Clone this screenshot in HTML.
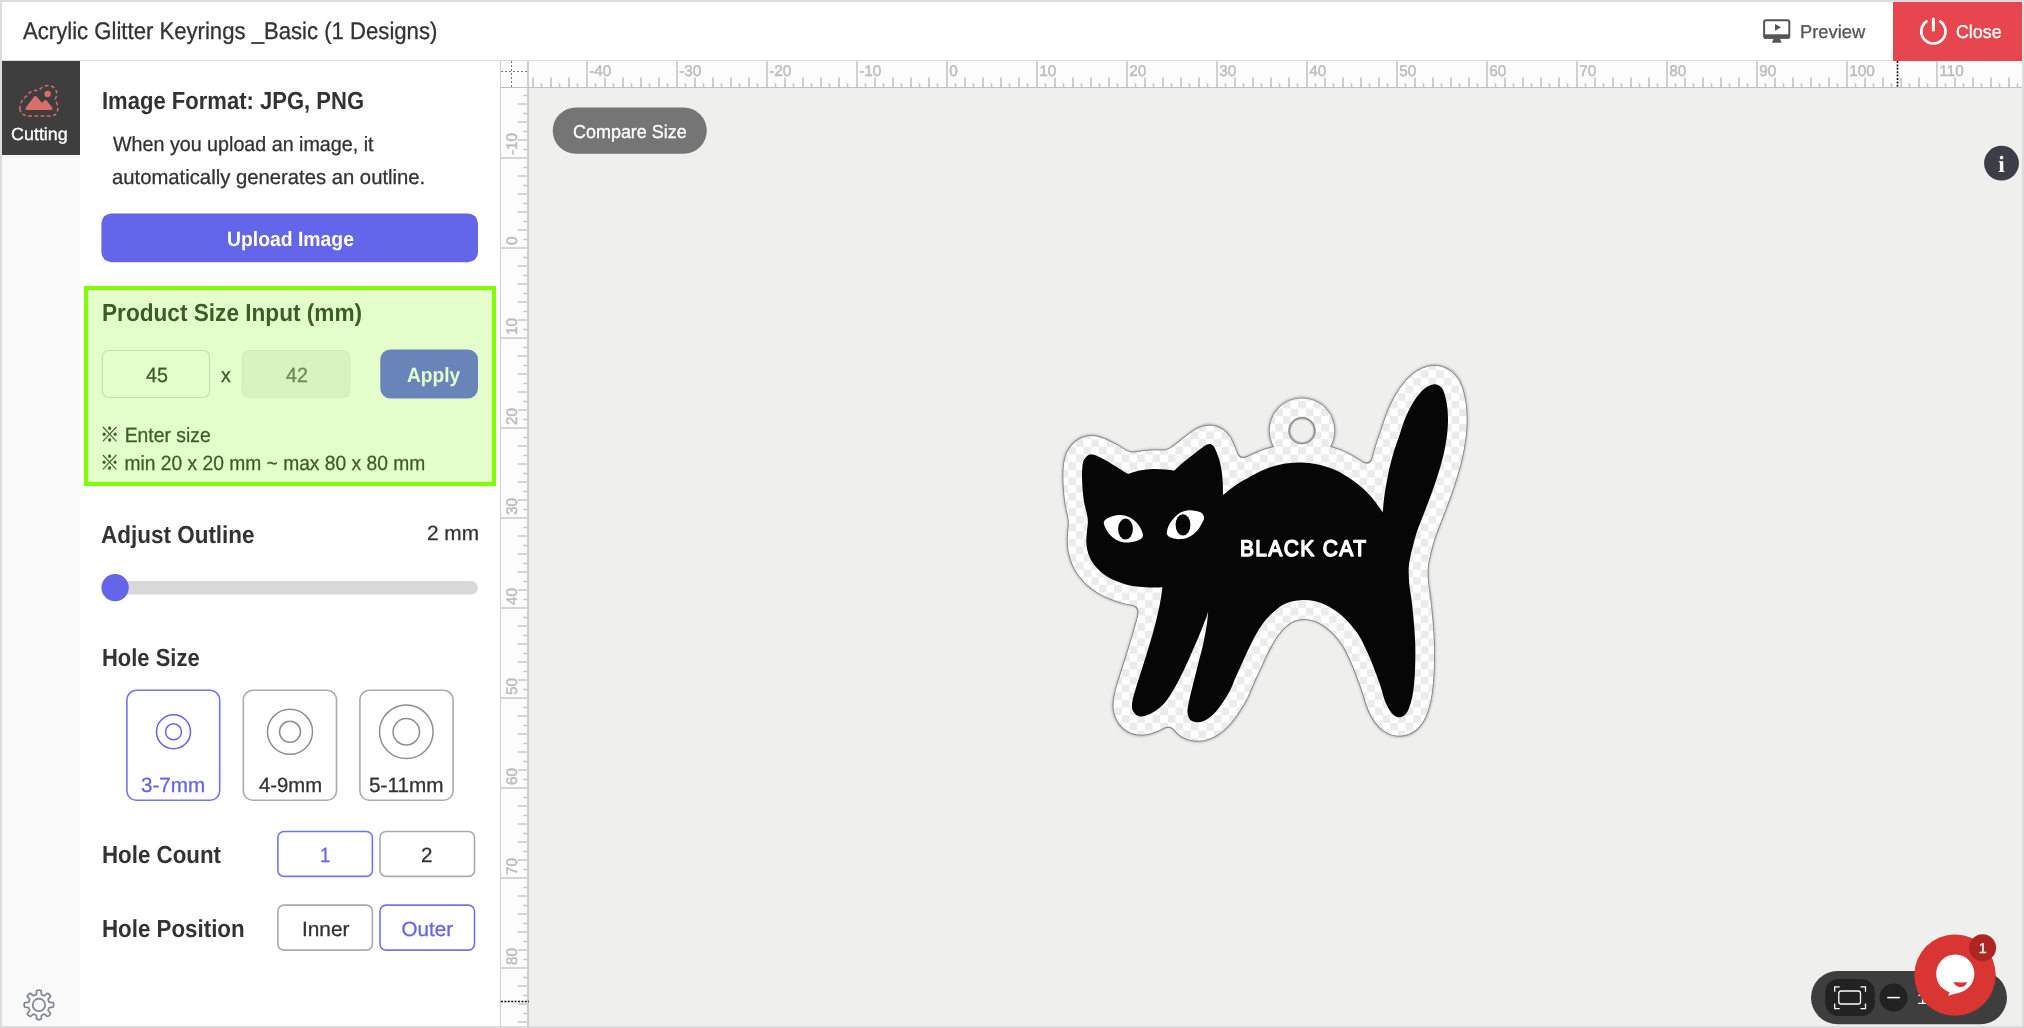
<!DOCTYPE html>
<html lang="en">
<head>
<meta charset="utf-8">
<title>Acrylic Glitter Keyrings _Basic (1 Designs)</title>
<style>
*{box-sizing:border-box;margin:0;padding:0}
html,body{width:2024px;height:1028px;overflow:hidden;background:#fff}
body{position:relative;font-family:"Liberation Sans","Noto Sans CJK KR",sans-serif;color:#333;font-size:20px;line-height:1;text-rendering:geometricPrecision}
.t{position:absolute;display:block;white-space:nowrap;line-height:1;font-weight:normal;transform-origin:0 0;-webkit-text-stroke:.3px currentColor}
.t.b{font-weight:bold;-webkit-text-stroke:0}
#frame{position:absolute;left:0;top:0;width:2024px;height:1028px;border:2px solid #dcdcdc;pointer-events:none;z-index:50}
#header{position:absolute;left:2px;top:2px;width:2020px;height:59px;background:#fff;border-bottom:1px solid #dcdcdc}
#close{position:absolute;left:1893px;top:2px;width:129px;height:59px;background:#e8464f}
#strip{position:absolute;left:2px;top:61px;width:78px;height:965px;background:#f9f9f9}
#tabline{position:absolute;left:2px;top:156px;width:78px;height:1px;background:#f2f2f2}
#tab{position:absolute;left:2px;top:61px;width:78px;height:94px;background:#3e3e3e}
#panel{position:absolute;left:80px;top:61px;width:420px;height:965px;background:#fff}
#vline{position:absolute;left:500px;top:61px;width:1px;height:965px;background:#cfcfcf}
#canvas{position:absolute;left:501px;top:61px;width:1521px;height:965px;background:#efefed}
#hl{position:absolute;left:84px;top:286px;width:412px;height:200px;border:4px solid #7fff00;background:rgba(127,255,0,.2);z-index:5}
svg{position:absolute;left:0;top:0;overflow:visible;will-change:transform}
</style>
</head>
<body>
<div id="header"></div>
<div id="close"></div>
<div id="strip"></div>
<div id="tab"></div>
<div id="tabline"></div>
<div id="panel"></div>
<div id="vline"></div>
<div id="canvas"></div>

<div id="hl"></div>

<svg id="art" width="2024" height="1028" viewBox="0 0 2024 1028">
<defs>
<pattern id="chk" x="1037.59" y="339.58" width="15.33" height="15.33" patternUnits="userSpaceOnUse">
<rect width="15.33" height="15.33" fill="#fff"/><rect width="7.665" height="7.665" fill="#ebebeb"/><rect x="7.665" y="7.665" width="7.665" height="7.665" fill="#ebebeb"/>
</pattern>
<filter id="sh" filterUnits="userSpaceOnUse" x="1030" y="330" width="470" height="440"><feGaussianBlur stdDeviation="1.6"/></filter>
<filter id="sh2" filterUnits="userSpaceOnUse" x="1280" y="410" width="44" height="44"><feGaussianBlur stdDeviation=".7"/></filter>
<filter id="sm" filterUnits="userSpaceOnUse" x="1030" y="330" width="470" height="440" color-interpolation-filters="sRGB"><feGaussianBlur stdDeviation="4"/><feComponentTransfer><feFuncA type="linear" slope="14" intercept="-6.5"/></feComponentTransfer></filter>
<mask id="mo" maskUnits="userSpaceOnUse" x="1030" y="330" width="470" height="440"><g fill="#fff" stroke="#fff"><g filter="url(#sm)"><path d="M1086.5 456.5C1087.1 456.2 1088.4 454.7 1090.0 454.5C1091.6 454.3 1093.0 454.3 1096.0 455.5C1099.0 456.7 1104.5 459.6 1108.3 461.8C1112.1 464.0 1115.7 466.5 1119.0 468.5C1122.3 470.5 1126.5 473.1 1128.0 474.0C1130.0 473.4 1135.8 471.3 1140.0 470.5C1144.2 469.7 1148.8 469.2 1153.0 469.0C1157.2 468.8 1161.4 469.2 1165.0 469.5C1168.6 469.8 1172.9 470.4 1174.5 470.6C1175.9 469.2 1180.1 465.0 1183.0 462.5C1185.9 460.0 1189.0 457.8 1192.0 455.5C1195.0 453.2 1198.5 450.3 1201.0 448.5C1203.5 446.7 1205.3 445.2 1207.0 444.5C1208.7 443.8 1209.8 443.7 1211.0 444.2C1212.2 444.7 1213.2 445.0 1214.5 447.5C1215.8 450.0 1217.8 455.2 1219.0 459.0C1220.2 462.8 1220.9 466.2 1221.5 470.0C1222.1 473.8 1222.5 477.8 1222.7 482.0C1223.0 486.2 1223.0 492.8 1223.0 495.0C1224.7 493.7 1229.4 489.7 1233.0 487.2C1236.6 484.7 1239.3 482.7 1244.5 479.8C1249.7 476.9 1257.6 472.3 1264.0 469.7C1270.4 467.1 1276.9 465.3 1283.0 464.1C1289.1 462.9 1294.8 462.5 1300.6 462.6C1306.4 462.7 1312.4 463.4 1318.0 464.5C1323.6 465.6 1329.2 467.5 1334.0 469.5C1338.8 471.5 1343.2 474.1 1347.0 476.4C1350.8 478.7 1353.7 480.9 1357.0 483.5C1360.3 486.1 1363.7 489.0 1366.7 492.0C1369.7 495.0 1372.3 498.1 1375.0 501.5C1377.7 504.9 1381.5 510.6 1382.8 512.4C1383.0 510.2 1383.5 503.4 1384.0 499.0C1384.5 494.6 1385.1 491.2 1386.0 486.0C1386.9 480.8 1388.2 473.8 1389.5 468.0C1390.8 462.2 1392.3 456.5 1394.0 451.0C1395.7 445.5 1397.7 440.3 1399.5 435.0C1401.3 429.7 1402.9 424.0 1404.8 419.2C1406.7 414.4 1408.8 410.1 1411.0 406.2C1413.2 402.2 1415.6 398.5 1418.0 395.5C1420.4 392.5 1422.8 389.9 1425.3 388.0C1427.8 386.1 1430.7 384.9 1432.8 384.4C1434.9 383.9 1436.4 384.2 1438.0 385.0C1439.6 385.8 1441.2 386.9 1442.5 389.0C1443.8 391.1 1444.7 394.3 1445.5 397.5C1446.3 400.7 1447.0 404.2 1447.4 408.0C1447.8 411.8 1448.0 416.1 1448.0 420.0C1448.0 423.9 1447.8 427.5 1447.4 431.7C1447.0 435.9 1446.3 440.4 1445.5 445.0C1444.7 449.6 1443.8 454.1 1442.5 459.0C1441.2 463.9 1439.6 469.3 1438.0 474.5C1436.4 479.7 1434.6 484.8 1432.8 490.0C1431.0 495.2 1429.0 500.3 1427.0 505.5C1425.0 510.7 1422.8 516.4 1421.0 521.0C1419.2 525.6 1417.8 529.1 1416.5 533.0C1415.2 536.9 1414.4 540.7 1413.4 544.5C1412.4 548.3 1411.2 552.6 1410.5 556.0C1409.8 559.4 1409.3 562.1 1409.0 565.0C1408.7 567.9 1408.6 569.8 1408.7 573.3C1408.8 576.8 1409.0 581.8 1409.5 586.0C1410.0 590.2 1410.8 594.1 1411.4 598.6C1412.0 603.1 1412.5 608.1 1413.0 613.0C1413.5 617.9 1413.9 622.8 1414.3 627.8C1414.7 632.8 1415.0 637.8 1415.2 643.0C1415.4 648.2 1415.4 653.7 1415.3 659.0C1415.2 664.3 1415.1 669.8 1414.8 675.0C1414.5 680.2 1414.0 685.5 1413.4 690.0C1412.8 694.5 1412.0 698.4 1411.0 702.0C1410.0 705.6 1408.8 709.1 1407.5 711.4C1406.2 713.7 1405.0 715.0 1403.5 716.0C1402.0 717.0 1400.2 717.3 1398.8 717.3C1397.4 717.3 1396.1 716.6 1395.0 716.0C1393.9 715.4 1393.1 714.7 1392.0 713.4C1390.9 712.1 1389.5 710.2 1388.3 708.0C1387.1 705.8 1385.9 703.6 1384.6 700.0C1383.3 696.4 1382.0 690.6 1380.5 686.2C1379.0 681.8 1377.7 678.1 1375.9 673.4C1374.2 668.7 1372.0 662.9 1370.0 658.2C1368.0 653.5 1366.1 649.3 1364.2 645.4C1362.3 641.5 1360.5 638.1 1358.4 634.8C1356.3 631.5 1353.7 628.3 1351.4 625.5C1349.1 622.7 1346.7 620.1 1344.4 617.9C1342.1 615.7 1339.7 613.9 1337.4 612.1C1335.1 610.4 1332.7 608.8 1330.4 607.4C1328.1 606.0 1326.1 605.0 1323.4 603.9C1320.7 602.8 1317.1 601.6 1314.0 601.0C1310.9 600.4 1307.8 600.1 1304.7 600.1C1301.6 600.1 1298.1 600.4 1295.4 600.8C1292.7 601.2 1290.5 601.7 1288.3 602.4C1286.1 603.1 1284.4 604.0 1282.5 605.1C1280.6 606.2 1278.7 607.7 1276.7 609.2C1274.8 610.8 1272.8 612.5 1270.8 614.4C1268.8 616.3 1266.9 618.4 1265.0 620.8C1263.1 623.2 1261.2 625.9 1259.2 629.0C1257.2 632.1 1255.2 635.8 1253.3 639.5C1251.3 643.2 1249.4 647.1 1247.5 651.2C1245.6 655.3 1243.7 659.7 1241.7 664.0C1239.8 668.3 1237.7 672.6 1235.8 676.9C1233.9 681.1 1232.3 685.8 1230.5 689.5C1228.7 693.2 1227.4 695.4 1225.0 699.0C1222.6 702.6 1219.2 707.9 1216.3 711.3C1213.4 714.6 1210.0 717.4 1207.5 719.1C1205.0 720.9 1203.2 721.3 1201.5 721.8C1199.8 722.3 1198.5 722.3 1197.0 722.2C1195.5 722.1 1193.8 721.9 1192.5 721.3C1191.2 720.6 1189.9 720.0 1189.1 718.3C1188.2 716.6 1187.4 714.2 1187.4 711.3C1187.4 708.4 1188.4 704.3 1189.1 700.8C1189.8 697.2 1190.7 693.6 1191.6 690.0C1192.5 686.4 1193.3 683.1 1194.4 678.9C1195.5 674.6 1196.8 669.3 1198.0 664.5C1199.2 659.7 1200.8 654.1 1201.8 650.0C1202.8 645.9 1203.4 643.0 1204.0 640.0C1204.6 637.0 1205.0 634.9 1205.6 631.7C1206.1 628.5 1206.9 624.4 1207.3 621.0C1207.7 617.6 1208.0 613.0 1208.2 611.4C1207.9 612.4 1207.0 615.6 1206.3 617.5C1205.6 619.4 1205.6 619.3 1204.1 623.0C1202.6 626.7 1199.7 634.3 1197.5 639.5C1195.3 644.7 1193.1 649.4 1190.9 654.4C1188.7 659.4 1186.5 664.6 1184.3 669.3C1182.1 674.0 1179.8 678.4 1177.6 682.5C1175.4 686.6 1173.2 690.6 1171.0 694.1C1168.8 697.6 1166.9 700.5 1164.4 703.2C1161.9 706.0 1158.8 708.7 1156.1 710.6C1153.3 712.5 1150.3 713.8 1147.9 714.8C1145.5 715.8 1143.3 716.3 1141.5 716.4C1139.7 716.5 1138.6 716.3 1137.3 715.6C1136.0 714.9 1134.7 713.6 1133.8 712.3C1132.9 710.9 1132.2 709.2 1132.0 707.5C1131.8 705.8 1132.0 703.9 1132.3 702.0C1132.6 700.1 1132.8 699.1 1133.6 696.0C1134.4 692.9 1136.0 687.7 1137.3 683.5C1138.6 679.3 1139.9 675.4 1141.4 670.6C1142.9 665.9 1144.7 660.2 1146.3 655.0C1147.9 649.8 1149.5 644.7 1151.0 639.5C1152.5 634.3 1154.0 629.2 1155.3 624.0C1156.6 618.8 1158.0 612.7 1159.0 608.3C1160.0 603.9 1160.4 601.0 1161.0 597.5C1161.6 594.0 1162.2 589.0 1162.4 587.3C1161.2 587.3 1157.6 587.6 1155.0 587.6C1152.4 587.6 1150.0 587.5 1147.0 587.3C1144.0 587.1 1140.2 586.9 1137.0 586.5C1133.8 586.1 1131.0 585.8 1127.8 585.0C1124.6 584.2 1121.2 583.1 1118.0 581.8C1114.8 580.5 1111.1 578.8 1108.3 577.2C1105.5 575.6 1103.3 573.9 1101.0 572.0C1098.7 570.1 1096.5 567.9 1094.7 565.6C1092.9 563.3 1091.2 560.6 1090.0 558.0C1088.8 555.4 1087.9 552.8 1087.3 550.0C1086.7 547.2 1086.3 544.2 1086.3 541.0C1086.2 537.8 1086.8 533.8 1087.0 531.0C1087.2 528.2 1087.7 526.3 1087.8 524.0C1087.9 521.7 1087.8 519.4 1087.5 517.0C1087.2 514.6 1086.4 512.0 1085.8 509.5C1085.2 506.9 1084.5 505.1 1084.0 501.7C1083.5 498.3 1082.9 493.2 1082.6 489.0C1082.3 484.8 1082.0 479.9 1082.0 476.4C1082.0 472.9 1082.0 470.6 1082.3 468.0C1082.5 465.4 1082.8 462.9 1083.5 461.0C1084.2 459.1 1086.0 457.2 1086.5 456.5Z" stroke-width="37.4" stroke-linejoin="round"/><path d="M1322.0 465.5C1324.0 466.2 1329.8 467.7 1334.0 469.5C1338.2 471.3 1343.2 474.1 1347.0 476.4C1350.8 478.7 1354.2 481.3 1357.0 483.5C1359.8 485.7 1362.8 488.5 1364.0 489.5" fill="none" stroke-width="40.6" stroke-linecap="round"/></g><circle cx="1302" cy="430.7" r="32.3" stroke="none"/></g></mask>
</defs>

<!-- rulers -->
<g id="rulers">
<rect x="501" y="61" width="1521" height="27" fill="#fcfcfc"/>
<rect x="501" y="61" width="27" height="965" fill="#fcfcfc"/>
<rect x="501" y="87" width="1521" height="1" fill="#c0c0c0"/>
<rect x="527.2" y="61" width="1.6" height="965" fill="#c4c4c4"/>
<path d="M587 61v26M677 61v26M767 61v26M857 61v26M947 61v26M1037 61v26M1127 61v26M1217 61v26M1307 61v26M1397 61v26M1487 61v26M1577 61v26M1667 61v26M1757 61v26M1847 61v26M1937 61v26M501 158h26M501 248h26M501 338h26M501 428h26M501 518h26M501 608h26M501 698h26M501 788h26M501 878h26M501 968h26" stroke="#c8c8c8" stroke-width="1.7" fill="none"/>
<path d="M533 77.6v9.4M541.5 83.2v3.8M551 77.6v9.4M559.5 83.2v3.8M569 77.6v9.4M577.5 83.2v3.8M595.5 83.2v3.8M605 77.6v9.4M613.5 83.2v3.8M623 77.6v9.4M631.5 83.2v3.8M641 77.6v9.4M649.5 83.2v3.8M659 77.6v9.4M667.5 83.2v3.8M685.5 83.2v3.8M695 77.6v9.4M703.5 83.2v3.8M713 77.6v9.4M721.5 83.2v3.8M731 77.6v9.4M739.5 83.2v3.8M749 77.6v9.4M757.5 83.2v3.8M775.5 83.2v3.8M785 77.6v9.4M793.5 83.2v3.8M803 77.6v9.4M811.5 83.2v3.8M821 77.6v9.4M829.5 83.2v3.8M839 77.6v9.4M847.5 83.2v3.8M865.5 83.2v3.8M875 77.6v9.4M883.5 83.2v3.8M893 77.6v9.4M901.5 83.2v3.8M911 77.6v9.4M919.5 83.2v3.8M929 77.6v9.4M937.5 83.2v3.8M955.5 83.2v3.8M965 77.6v9.4M973.5 83.2v3.8M983 77.6v9.4M991.5 83.2v3.8M1001 77.6v9.4M1009.5 83.2v3.8M1019 77.6v9.4M1027.5 83.2v3.8M1045.5 83.2v3.8M1055 77.6v9.4M1063.5 83.2v3.8M1073 77.6v9.4M1081.5 83.2v3.8M1091 77.6v9.4M1099.5 83.2v3.8M1109 77.6v9.4M1117.5 83.2v3.8M1135.5 83.2v3.8M1145 77.6v9.4M1153.5 83.2v3.8M1163 77.6v9.4M1171.5 83.2v3.8M1181 77.6v9.4M1189.5 83.2v3.8M1199 77.6v9.4M1207.5 83.2v3.8M1225.5 83.2v3.8M1235 77.6v9.4M1243.5 83.2v3.8M1253 77.6v9.4M1261.5 83.2v3.8M1271 77.6v9.4M1279.5 83.2v3.8M1289 77.6v9.4M1297.5 83.2v3.8M1315.5 83.2v3.8M1325 77.6v9.4M1333.5 83.2v3.8M1343 77.6v9.4M1351.5 83.2v3.8M1361 77.6v9.4M1369.5 83.2v3.8M1379 77.6v9.4M1387.5 83.2v3.8M1405.5 83.2v3.8M1415 77.6v9.4M1423.5 83.2v3.8M1433 77.6v9.4M1441.5 83.2v3.8M1451 77.6v9.4M1459.5 83.2v3.8M1469 77.6v9.4M1477.5 83.2v3.8M1495.5 83.2v3.8M1505 77.6v9.4M1513.5 83.2v3.8M1523 77.6v9.4M1531.5 83.2v3.8M1541 77.6v9.4M1549.5 83.2v3.8M1559 77.6v9.4M1567.5 83.2v3.8M1585.5 83.2v3.8M1595 77.6v9.4M1603.5 83.2v3.8M1613 77.6v9.4M1621.5 83.2v3.8M1631 77.6v9.4M1639.5 83.2v3.8M1649 77.6v9.4M1657.5 83.2v3.8M1675.5 83.2v3.8M1685 77.6v9.4M1693.5 83.2v3.8M1703 77.6v9.4M1711.5 83.2v3.8M1721 77.6v9.4M1729.5 83.2v3.8M1739 77.6v9.4M1747.5 83.2v3.8M1765.5 83.2v3.8M1775 77.6v9.4M1783.5 83.2v3.8M1793 77.6v9.4M1801.5 83.2v3.8M1811 77.6v9.4M1819.5 83.2v3.8M1829 77.6v9.4M1837.5 83.2v3.8M1855.5 83.2v3.8M1865 77.6v9.4M1873.5 83.2v3.8M1883 77.6v9.4M1891.5 83.2v3.8M1901 77.6v9.4M1909.5 83.2v3.8M1919 77.6v9.4M1927.5 83.2v3.8M1945.5 83.2v3.8M1955 77.6v9.4M1963.5 83.2v3.8M1973 77.6v9.4M1981.5 83.2v3.8M1991 77.6v9.4M1999.5 83.2v3.8M2009 77.6v9.4M2017.5 83.2v3.8M523.2 95.5h3.8M517.8 104h9.2M523.2 113.5h3.8M517.8 122h9.2M523.2 131.5h3.8M517.8 140h9.2M523.2 149.5h3.8M523.2 167.5h3.8M517.8 176h9.2M523.2 185.5h3.8M517.8 194h9.2M523.2 203.5h3.8M517.8 212h9.2M523.2 221.5h3.8M517.8 230h9.2M523.2 239.5h3.8M523.2 257.5h3.8M517.8 266h9.2M523.2 275.5h3.8M517.8 284h9.2M523.2 293.5h3.8M517.8 302h9.2M523.2 311.5h3.8M517.8 320h9.2M523.2 329.5h3.8M523.2 347.5h3.8M517.8 356h9.2M523.2 365.5h3.8M517.8 374h9.2M523.2 383.5h3.8M517.8 392h9.2M523.2 401.5h3.8M517.8 410h9.2M523.2 419.5h3.8M523.2 437.5h3.8M517.8 446h9.2M523.2 455.5h3.8M517.8 464h9.2M523.2 473.5h3.8M517.8 482h9.2M523.2 491.5h3.8M517.8 500h9.2M523.2 509.5h3.8M523.2 527.5h3.8M517.8 536h9.2M523.2 545.5h3.8M517.8 554h9.2M523.2 563.5h3.8M517.8 572h9.2M523.2 581.5h3.8M517.8 590h9.2M523.2 599.5h3.8M523.2 617.5h3.8M517.8 626h9.2M523.2 635.5h3.8M517.8 644h9.2M523.2 653.5h3.8M517.8 662h9.2M523.2 671.5h3.8M517.8 680h9.2M523.2 689.5h3.8M523.2 707.5h3.8M517.8 716h9.2M523.2 725.5h3.8M517.8 734h9.2M523.2 743.5h3.8M517.8 752h9.2M523.2 761.5h3.8M517.8 770h9.2M523.2 779.5h3.8M523.2 797.5h3.8M517.8 806h9.2M523.2 815.5h3.8M517.8 824h9.2M523.2 833.5h3.8M517.8 842h9.2M523.2 851.5h3.8M517.8 860h9.2M523.2 869.5h3.8M523.2 887.5h3.8M517.8 896h9.2M523.2 905.5h3.8M517.8 914h9.2M523.2 923.5h3.8M517.8 932h9.2M523.2 941.5h3.8M517.8 950h9.2M523.2 959.5h3.8M523.2 977.5h3.8M517.8 986h9.2M523.2 995.5h3.8M517.8 1004h9.2M523.2 1013.5h3.8M517.8 1022h9.2" stroke="#c6c6c6" stroke-width="1.7" fill="none"/>
<g font-family="'Liberation Sans',sans-serif" font-size="15.4" fill="#bcbcbc" stroke="#bcbcbc" stroke-width=".45" stroke-linejoin="round"><text x="589.2" y="75.9">-40</text><text x="679.2" y="75.9">-30</text><text x="769.2" y="75.9">-20</text><text x="859.2" y="75.9">-10</text><text x="949.2" y="75.9">0</text><text x="1039.2" y="75.9">10</text><text x="1129.2" y="75.9">20</text><text x="1219.2" y="75.9">30</text><text x="1309.2" y="75.9">40</text><text x="1399.2" y="75.9">50</text><text x="1489.2" y="75.9">60</text><text x="1579.2" y="75.9">70</text><text x="1669.2" y="75.9">80</text><text x="1759.2" y="75.9">90</text><text x="1849.2" y="75.9">100</text><text x="1939.2" y="75.9">110</text><text transform="translate(516.6 155.1) rotate(-90)">-10</text><text transform="translate(516.6 245.1) rotate(-90)">0</text><text transform="translate(516.6 335.1) rotate(-90)">10</text><text transform="translate(516.6 425.1) rotate(-90)">20</text><text transform="translate(516.6 515.1) rotate(-90)">30</text><text transform="translate(516.6 605.1) rotate(-90)">40</text><text transform="translate(516.6 695.1) rotate(-90)">50</text><text transform="translate(516.6 785.1) rotate(-90)">60</text><text transform="translate(516.6 875.1) rotate(-90)">70</text><text transform="translate(516.6 965.1) rotate(-90)">80</text></g>
<path d="M511.5 61v26M501 71.5h26" stroke="#777" stroke-width="1" stroke-dasharray="2 2" fill="none"/>
<path d="M1897.5 61v27" stroke="#111" stroke-width="1.6" stroke-dasharray="2 1.4" fill="none"/>
<path d="M501 1001.5h28" stroke="#111" stroke-width="1.6" stroke-dasharray="2 1.4" fill="none"/>
</g>

<!-- keyring artwork -->
<g id="keyring">
<g filter="url(#sh)" opacity=".6" fill="#555" stroke="#555">
<path d="M1086.5 456.5C1087.1 456.2 1088.4 454.7 1090.0 454.5C1091.6 454.3 1093.0 454.3 1096.0 455.5C1099.0 456.7 1104.5 459.6 1108.3 461.8C1112.1 464.0 1115.7 466.5 1119.0 468.5C1122.3 470.5 1126.5 473.1 1128.0 474.0C1130.0 473.4 1135.8 471.3 1140.0 470.5C1144.2 469.7 1148.8 469.2 1153.0 469.0C1157.2 468.8 1161.4 469.2 1165.0 469.5C1168.6 469.8 1172.9 470.4 1174.5 470.6C1175.9 469.2 1180.1 465.0 1183.0 462.5C1185.9 460.0 1189.0 457.8 1192.0 455.5C1195.0 453.2 1198.5 450.3 1201.0 448.5C1203.5 446.7 1205.3 445.2 1207.0 444.5C1208.7 443.8 1209.8 443.7 1211.0 444.2C1212.2 444.7 1213.2 445.0 1214.5 447.5C1215.8 450.0 1217.8 455.2 1219.0 459.0C1220.2 462.8 1220.9 466.2 1221.5 470.0C1222.1 473.8 1222.5 477.8 1222.7 482.0C1223.0 486.2 1223.0 492.8 1223.0 495.0C1224.7 493.7 1229.4 489.7 1233.0 487.2C1236.6 484.7 1239.3 482.7 1244.5 479.8C1249.7 476.9 1257.6 472.3 1264.0 469.7C1270.4 467.1 1276.9 465.3 1283.0 464.1C1289.1 462.9 1294.8 462.5 1300.6 462.6C1306.4 462.7 1312.4 463.4 1318.0 464.5C1323.6 465.6 1329.2 467.5 1334.0 469.5C1338.8 471.5 1343.2 474.1 1347.0 476.4C1350.8 478.7 1353.7 480.9 1357.0 483.5C1360.3 486.1 1363.7 489.0 1366.7 492.0C1369.7 495.0 1372.3 498.1 1375.0 501.5C1377.7 504.9 1381.5 510.6 1382.8 512.4C1383.0 510.2 1383.5 503.4 1384.0 499.0C1384.5 494.6 1385.1 491.2 1386.0 486.0C1386.9 480.8 1388.2 473.8 1389.5 468.0C1390.8 462.2 1392.3 456.5 1394.0 451.0C1395.7 445.5 1397.7 440.3 1399.5 435.0C1401.3 429.7 1402.9 424.0 1404.8 419.2C1406.7 414.4 1408.8 410.1 1411.0 406.2C1413.2 402.2 1415.6 398.5 1418.0 395.5C1420.4 392.5 1422.8 389.9 1425.3 388.0C1427.8 386.1 1430.7 384.9 1432.8 384.4C1434.9 383.9 1436.4 384.2 1438.0 385.0C1439.6 385.8 1441.2 386.9 1442.5 389.0C1443.8 391.1 1444.7 394.3 1445.5 397.5C1446.3 400.7 1447.0 404.2 1447.4 408.0C1447.8 411.8 1448.0 416.1 1448.0 420.0C1448.0 423.9 1447.8 427.5 1447.4 431.7C1447.0 435.9 1446.3 440.4 1445.5 445.0C1444.7 449.6 1443.8 454.1 1442.5 459.0C1441.2 463.9 1439.6 469.3 1438.0 474.5C1436.4 479.7 1434.6 484.8 1432.8 490.0C1431.0 495.2 1429.0 500.3 1427.0 505.5C1425.0 510.7 1422.8 516.4 1421.0 521.0C1419.2 525.6 1417.8 529.1 1416.5 533.0C1415.2 536.9 1414.4 540.7 1413.4 544.5C1412.4 548.3 1411.2 552.6 1410.5 556.0C1409.8 559.4 1409.3 562.1 1409.0 565.0C1408.7 567.9 1408.6 569.8 1408.7 573.3C1408.8 576.8 1409.0 581.8 1409.5 586.0C1410.0 590.2 1410.8 594.1 1411.4 598.6C1412.0 603.1 1412.5 608.1 1413.0 613.0C1413.5 617.9 1413.9 622.8 1414.3 627.8C1414.7 632.8 1415.0 637.8 1415.2 643.0C1415.4 648.2 1415.4 653.7 1415.3 659.0C1415.2 664.3 1415.1 669.8 1414.8 675.0C1414.5 680.2 1414.0 685.5 1413.4 690.0C1412.8 694.5 1412.0 698.4 1411.0 702.0C1410.0 705.6 1408.8 709.1 1407.5 711.4C1406.2 713.7 1405.0 715.0 1403.5 716.0C1402.0 717.0 1400.2 717.3 1398.8 717.3C1397.4 717.3 1396.1 716.6 1395.0 716.0C1393.9 715.4 1393.1 714.7 1392.0 713.4C1390.9 712.1 1389.5 710.2 1388.3 708.0C1387.1 705.8 1385.9 703.6 1384.6 700.0C1383.3 696.4 1382.0 690.6 1380.5 686.2C1379.0 681.8 1377.7 678.1 1375.9 673.4C1374.2 668.7 1372.0 662.9 1370.0 658.2C1368.0 653.5 1366.1 649.3 1364.2 645.4C1362.3 641.5 1360.5 638.1 1358.4 634.8C1356.3 631.5 1353.7 628.3 1351.4 625.5C1349.1 622.7 1346.7 620.1 1344.4 617.9C1342.1 615.7 1339.7 613.9 1337.4 612.1C1335.1 610.4 1332.7 608.8 1330.4 607.4C1328.1 606.0 1326.1 605.0 1323.4 603.9C1320.7 602.8 1317.1 601.6 1314.0 601.0C1310.9 600.4 1307.8 600.1 1304.7 600.1C1301.6 600.1 1298.1 600.4 1295.4 600.8C1292.7 601.2 1290.5 601.7 1288.3 602.4C1286.1 603.1 1284.4 604.0 1282.5 605.1C1280.6 606.2 1278.7 607.7 1276.7 609.2C1274.8 610.8 1272.8 612.5 1270.8 614.4C1268.8 616.3 1266.9 618.4 1265.0 620.8C1263.1 623.2 1261.2 625.9 1259.2 629.0C1257.2 632.1 1255.2 635.8 1253.3 639.5C1251.3 643.2 1249.4 647.1 1247.5 651.2C1245.6 655.3 1243.7 659.7 1241.7 664.0C1239.8 668.3 1237.7 672.6 1235.8 676.9C1233.9 681.1 1232.3 685.8 1230.5 689.5C1228.7 693.2 1227.4 695.4 1225.0 699.0C1222.6 702.6 1219.2 707.9 1216.3 711.3C1213.4 714.6 1210.0 717.4 1207.5 719.1C1205.0 720.9 1203.2 721.3 1201.5 721.8C1199.8 722.3 1198.5 722.3 1197.0 722.2C1195.5 722.1 1193.8 721.9 1192.5 721.3C1191.2 720.6 1189.9 720.0 1189.1 718.3C1188.2 716.6 1187.4 714.2 1187.4 711.3C1187.4 708.4 1188.4 704.3 1189.1 700.8C1189.8 697.2 1190.7 693.6 1191.6 690.0C1192.5 686.4 1193.3 683.1 1194.4 678.9C1195.5 674.6 1196.8 669.3 1198.0 664.5C1199.2 659.7 1200.8 654.1 1201.8 650.0C1202.8 645.9 1203.4 643.0 1204.0 640.0C1204.6 637.0 1205.0 634.9 1205.6 631.7C1206.1 628.5 1206.9 624.4 1207.3 621.0C1207.7 617.6 1208.0 613.0 1208.2 611.4C1207.9 612.4 1207.0 615.6 1206.3 617.5C1205.6 619.4 1205.6 619.3 1204.1 623.0C1202.6 626.7 1199.7 634.3 1197.5 639.5C1195.3 644.7 1193.1 649.4 1190.9 654.4C1188.7 659.4 1186.5 664.6 1184.3 669.3C1182.1 674.0 1179.8 678.4 1177.6 682.5C1175.4 686.6 1173.2 690.6 1171.0 694.1C1168.8 697.6 1166.9 700.5 1164.4 703.2C1161.9 706.0 1158.8 708.7 1156.1 710.6C1153.3 712.5 1150.3 713.8 1147.9 714.8C1145.5 715.8 1143.3 716.3 1141.5 716.4C1139.7 716.5 1138.6 716.3 1137.3 715.6C1136.0 714.9 1134.7 713.6 1133.8 712.3C1132.9 710.9 1132.2 709.2 1132.0 707.5C1131.8 705.8 1132.0 703.9 1132.3 702.0C1132.6 700.1 1132.8 699.1 1133.6 696.0C1134.4 692.9 1136.0 687.7 1137.3 683.5C1138.6 679.3 1139.9 675.4 1141.4 670.6C1142.9 665.9 1144.7 660.2 1146.3 655.0C1147.9 649.8 1149.5 644.7 1151.0 639.5C1152.5 634.3 1154.0 629.2 1155.3 624.0C1156.6 618.8 1158.0 612.7 1159.0 608.3C1160.0 603.9 1160.4 601.0 1161.0 597.5C1161.6 594.0 1162.2 589.0 1162.4 587.3C1161.2 587.3 1157.6 587.6 1155.0 587.6C1152.4 587.6 1150.0 587.5 1147.0 587.3C1144.0 587.1 1140.2 586.9 1137.0 586.5C1133.8 586.1 1131.0 585.8 1127.8 585.0C1124.6 584.2 1121.2 583.1 1118.0 581.8C1114.8 580.5 1111.1 578.8 1108.3 577.2C1105.5 575.6 1103.3 573.9 1101.0 572.0C1098.7 570.1 1096.5 567.9 1094.7 565.6C1092.9 563.3 1091.2 560.6 1090.0 558.0C1088.8 555.4 1087.9 552.8 1087.3 550.0C1086.7 547.2 1086.3 544.2 1086.3 541.0C1086.2 537.8 1086.8 533.8 1087.0 531.0C1087.2 528.2 1087.7 526.3 1087.8 524.0C1087.9 521.7 1087.8 519.4 1087.5 517.0C1087.2 514.6 1086.4 512.0 1085.8 509.5C1085.2 506.9 1084.5 505.1 1084.0 501.7C1083.5 498.3 1082.9 493.2 1082.6 489.0C1082.3 484.8 1082.0 479.9 1082.0 476.4C1082.0 472.9 1082.0 470.6 1082.3 468.0C1082.5 465.4 1082.8 462.9 1083.5 461.0C1084.2 459.1 1086.0 457.2 1086.5 456.5Z" stroke-width="39" stroke-linejoin="round"/><path d="M1322.0 465.5C1324.0 466.2 1329.8 467.7 1334.0 469.5C1338.2 471.3 1343.2 474.1 1347.0 476.4C1350.8 478.7 1354.2 481.3 1357.0 483.5C1359.8 485.7 1362.8 488.5 1364.0 489.5" fill="none" stroke-width="42" stroke-linecap="round"/>
<circle cx="1302" cy="430.7" r="33.5" stroke="none"/>
</g>
<g fill="#909090" stroke="#909090">
<g filter="url(#sm)"><path d="M1086.5 456.5C1087.1 456.2 1088.4 454.7 1090.0 454.5C1091.6 454.3 1093.0 454.3 1096.0 455.5C1099.0 456.7 1104.5 459.6 1108.3 461.8C1112.1 464.0 1115.7 466.5 1119.0 468.5C1122.3 470.5 1126.5 473.1 1128.0 474.0C1130.0 473.4 1135.8 471.3 1140.0 470.5C1144.2 469.7 1148.8 469.2 1153.0 469.0C1157.2 468.8 1161.4 469.2 1165.0 469.5C1168.6 469.8 1172.9 470.4 1174.5 470.6C1175.9 469.2 1180.1 465.0 1183.0 462.5C1185.9 460.0 1189.0 457.8 1192.0 455.5C1195.0 453.2 1198.5 450.3 1201.0 448.5C1203.5 446.7 1205.3 445.2 1207.0 444.5C1208.7 443.8 1209.8 443.7 1211.0 444.2C1212.2 444.7 1213.2 445.0 1214.5 447.5C1215.8 450.0 1217.8 455.2 1219.0 459.0C1220.2 462.8 1220.9 466.2 1221.5 470.0C1222.1 473.8 1222.5 477.8 1222.7 482.0C1223.0 486.2 1223.0 492.8 1223.0 495.0C1224.7 493.7 1229.4 489.7 1233.0 487.2C1236.6 484.7 1239.3 482.7 1244.5 479.8C1249.7 476.9 1257.6 472.3 1264.0 469.7C1270.4 467.1 1276.9 465.3 1283.0 464.1C1289.1 462.9 1294.8 462.5 1300.6 462.6C1306.4 462.7 1312.4 463.4 1318.0 464.5C1323.6 465.6 1329.2 467.5 1334.0 469.5C1338.8 471.5 1343.2 474.1 1347.0 476.4C1350.8 478.7 1353.7 480.9 1357.0 483.5C1360.3 486.1 1363.7 489.0 1366.7 492.0C1369.7 495.0 1372.3 498.1 1375.0 501.5C1377.7 504.9 1381.5 510.6 1382.8 512.4C1383.0 510.2 1383.5 503.4 1384.0 499.0C1384.5 494.6 1385.1 491.2 1386.0 486.0C1386.9 480.8 1388.2 473.8 1389.5 468.0C1390.8 462.2 1392.3 456.5 1394.0 451.0C1395.7 445.5 1397.7 440.3 1399.5 435.0C1401.3 429.7 1402.9 424.0 1404.8 419.2C1406.7 414.4 1408.8 410.1 1411.0 406.2C1413.2 402.2 1415.6 398.5 1418.0 395.5C1420.4 392.5 1422.8 389.9 1425.3 388.0C1427.8 386.1 1430.7 384.9 1432.8 384.4C1434.9 383.9 1436.4 384.2 1438.0 385.0C1439.6 385.8 1441.2 386.9 1442.5 389.0C1443.8 391.1 1444.7 394.3 1445.5 397.5C1446.3 400.7 1447.0 404.2 1447.4 408.0C1447.8 411.8 1448.0 416.1 1448.0 420.0C1448.0 423.9 1447.8 427.5 1447.4 431.7C1447.0 435.9 1446.3 440.4 1445.5 445.0C1444.7 449.6 1443.8 454.1 1442.5 459.0C1441.2 463.9 1439.6 469.3 1438.0 474.5C1436.4 479.7 1434.6 484.8 1432.8 490.0C1431.0 495.2 1429.0 500.3 1427.0 505.5C1425.0 510.7 1422.8 516.4 1421.0 521.0C1419.2 525.6 1417.8 529.1 1416.5 533.0C1415.2 536.9 1414.4 540.7 1413.4 544.5C1412.4 548.3 1411.2 552.6 1410.5 556.0C1409.8 559.4 1409.3 562.1 1409.0 565.0C1408.7 567.9 1408.6 569.8 1408.7 573.3C1408.8 576.8 1409.0 581.8 1409.5 586.0C1410.0 590.2 1410.8 594.1 1411.4 598.6C1412.0 603.1 1412.5 608.1 1413.0 613.0C1413.5 617.9 1413.9 622.8 1414.3 627.8C1414.7 632.8 1415.0 637.8 1415.2 643.0C1415.4 648.2 1415.4 653.7 1415.3 659.0C1415.2 664.3 1415.1 669.8 1414.8 675.0C1414.5 680.2 1414.0 685.5 1413.4 690.0C1412.8 694.5 1412.0 698.4 1411.0 702.0C1410.0 705.6 1408.8 709.1 1407.5 711.4C1406.2 713.7 1405.0 715.0 1403.5 716.0C1402.0 717.0 1400.2 717.3 1398.8 717.3C1397.4 717.3 1396.1 716.6 1395.0 716.0C1393.9 715.4 1393.1 714.7 1392.0 713.4C1390.9 712.1 1389.5 710.2 1388.3 708.0C1387.1 705.8 1385.9 703.6 1384.6 700.0C1383.3 696.4 1382.0 690.6 1380.5 686.2C1379.0 681.8 1377.7 678.1 1375.9 673.4C1374.2 668.7 1372.0 662.9 1370.0 658.2C1368.0 653.5 1366.1 649.3 1364.2 645.4C1362.3 641.5 1360.5 638.1 1358.4 634.8C1356.3 631.5 1353.7 628.3 1351.4 625.5C1349.1 622.7 1346.7 620.1 1344.4 617.9C1342.1 615.7 1339.7 613.9 1337.4 612.1C1335.1 610.4 1332.7 608.8 1330.4 607.4C1328.1 606.0 1326.1 605.0 1323.4 603.9C1320.7 602.8 1317.1 601.6 1314.0 601.0C1310.9 600.4 1307.8 600.1 1304.7 600.1C1301.6 600.1 1298.1 600.4 1295.4 600.8C1292.7 601.2 1290.5 601.7 1288.3 602.4C1286.1 603.1 1284.4 604.0 1282.5 605.1C1280.6 606.2 1278.7 607.7 1276.7 609.2C1274.8 610.8 1272.8 612.5 1270.8 614.4C1268.8 616.3 1266.9 618.4 1265.0 620.8C1263.1 623.2 1261.2 625.9 1259.2 629.0C1257.2 632.1 1255.2 635.8 1253.3 639.5C1251.3 643.2 1249.4 647.1 1247.5 651.2C1245.6 655.3 1243.7 659.7 1241.7 664.0C1239.8 668.3 1237.7 672.6 1235.8 676.9C1233.9 681.1 1232.3 685.8 1230.5 689.5C1228.7 693.2 1227.4 695.4 1225.0 699.0C1222.6 702.6 1219.2 707.9 1216.3 711.3C1213.4 714.6 1210.0 717.4 1207.5 719.1C1205.0 720.9 1203.2 721.3 1201.5 721.8C1199.8 722.3 1198.5 722.3 1197.0 722.2C1195.5 722.1 1193.8 721.9 1192.5 721.3C1191.2 720.6 1189.9 720.0 1189.1 718.3C1188.2 716.6 1187.4 714.2 1187.4 711.3C1187.4 708.4 1188.4 704.3 1189.1 700.8C1189.8 697.2 1190.7 693.6 1191.6 690.0C1192.5 686.4 1193.3 683.1 1194.4 678.9C1195.5 674.6 1196.8 669.3 1198.0 664.5C1199.2 659.7 1200.8 654.1 1201.8 650.0C1202.8 645.9 1203.4 643.0 1204.0 640.0C1204.6 637.0 1205.0 634.9 1205.6 631.7C1206.1 628.5 1206.9 624.4 1207.3 621.0C1207.7 617.6 1208.0 613.0 1208.2 611.4C1207.9 612.4 1207.0 615.6 1206.3 617.5C1205.6 619.4 1205.6 619.3 1204.1 623.0C1202.6 626.7 1199.7 634.3 1197.5 639.5C1195.3 644.7 1193.1 649.4 1190.9 654.4C1188.7 659.4 1186.5 664.6 1184.3 669.3C1182.1 674.0 1179.8 678.4 1177.6 682.5C1175.4 686.6 1173.2 690.6 1171.0 694.1C1168.8 697.6 1166.9 700.5 1164.4 703.2C1161.9 706.0 1158.8 708.7 1156.1 710.6C1153.3 712.5 1150.3 713.8 1147.9 714.8C1145.5 715.8 1143.3 716.3 1141.5 716.4C1139.7 716.5 1138.6 716.3 1137.3 715.6C1136.0 714.9 1134.7 713.6 1133.8 712.3C1132.9 710.9 1132.2 709.2 1132.0 707.5C1131.8 705.8 1132.0 703.9 1132.3 702.0C1132.6 700.1 1132.8 699.1 1133.6 696.0C1134.4 692.9 1136.0 687.7 1137.3 683.5C1138.6 679.3 1139.9 675.4 1141.4 670.6C1142.9 665.9 1144.7 660.2 1146.3 655.0C1147.9 649.8 1149.5 644.7 1151.0 639.5C1152.5 634.3 1154.0 629.2 1155.3 624.0C1156.6 618.8 1158.0 612.7 1159.0 608.3C1160.0 603.9 1160.4 601.0 1161.0 597.5C1161.6 594.0 1162.2 589.0 1162.4 587.3C1161.2 587.3 1157.6 587.6 1155.0 587.6C1152.4 587.6 1150.0 587.5 1147.0 587.3C1144.0 587.1 1140.2 586.9 1137.0 586.5C1133.8 586.1 1131.0 585.8 1127.8 585.0C1124.6 584.2 1121.2 583.1 1118.0 581.8C1114.8 580.5 1111.1 578.8 1108.3 577.2C1105.5 575.6 1103.3 573.9 1101.0 572.0C1098.7 570.1 1096.5 567.9 1094.7 565.6C1092.9 563.3 1091.2 560.6 1090.0 558.0C1088.8 555.4 1087.9 552.8 1087.3 550.0C1086.7 547.2 1086.3 544.2 1086.3 541.0C1086.2 537.8 1086.8 533.8 1087.0 531.0C1087.2 528.2 1087.7 526.3 1087.8 524.0C1087.9 521.7 1087.8 519.4 1087.5 517.0C1087.2 514.6 1086.4 512.0 1085.8 509.5C1085.2 506.9 1084.5 505.1 1084.0 501.7C1083.5 498.3 1082.9 493.2 1082.6 489.0C1082.3 484.8 1082.0 479.9 1082.0 476.4C1082.0 472.9 1082.0 470.6 1082.3 468.0C1082.5 465.4 1082.8 462.9 1083.5 461.0C1084.2 459.1 1086.0 457.2 1086.5 456.5Z" stroke-width="39.4" stroke-linejoin="round"/><path d="M1322.0 465.5C1324.0 466.2 1329.8 467.7 1334.0 469.5C1338.2 471.3 1343.2 474.1 1347.0 476.4C1350.8 478.7 1354.2 481.3 1357.0 483.5C1359.8 485.7 1362.8 488.5 1364.0 489.5" fill="none" stroke-width="42.6" stroke-linecap="round"/></g>
<circle cx="1302" cy="430.7" r="33.3" stroke="none"/>
</g>
<rect x="1040" y="340" width="450" height="420" fill="url(#chk)" mask="url(#mo)"/>
<circle cx="1302" cy="430.7" r="13" fill="#efefed"/><circle cx="1302" cy="430.7" r="12.4" fill="none" stroke="#777" stroke-width="2.4" filter="url(#sh2)" opacity=".45"/><circle cx="1302" cy="430.7" r="13" fill="none" stroke="#8c8c8c" stroke-width="1.3"/>
<path d="M1086.5 456.5C1087.1 456.2 1088.4 454.7 1090.0 454.5C1091.6 454.3 1093.0 454.3 1096.0 455.5C1099.0 456.7 1104.5 459.6 1108.3 461.8C1112.1 464.0 1115.7 466.5 1119.0 468.5C1122.3 470.5 1126.5 473.1 1128.0 474.0C1130.0 473.4 1135.8 471.3 1140.0 470.5C1144.2 469.7 1148.8 469.2 1153.0 469.0C1157.2 468.8 1161.4 469.2 1165.0 469.5C1168.6 469.8 1172.9 470.4 1174.5 470.6C1175.9 469.2 1180.1 465.0 1183.0 462.5C1185.9 460.0 1189.0 457.8 1192.0 455.5C1195.0 453.2 1198.5 450.3 1201.0 448.5C1203.5 446.7 1205.3 445.2 1207.0 444.5C1208.7 443.8 1209.8 443.7 1211.0 444.2C1212.2 444.7 1213.2 445.0 1214.5 447.5C1215.8 450.0 1217.8 455.2 1219.0 459.0C1220.2 462.8 1220.9 466.2 1221.5 470.0C1222.1 473.8 1222.5 477.8 1222.7 482.0C1223.0 486.2 1223.0 492.8 1223.0 495.0C1224.7 493.7 1229.4 489.7 1233.0 487.2C1236.6 484.7 1239.3 482.7 1244.5 479.8C1249.7 476.9 1257.6 472.3 1264.0 469.7C1270.4 467.1 1276.9 465.3 1283.0 464.1C1289.1 462.9 1294.8 462.5 1300.6 462.6C1306.4 462.7 1312.4 463.4 1318.0 464.5C1323.6 465.6 1329.2 467.5 1334.0 469.5C1338.8 471.5 1343.2 474.1 1347.0 476.4C1350.8 478.7 1353.7 480.9 1357.0 483.5C1360.3 486.1 1363.7 489.0 1366.7 492.0C1369.7 495.0 1372.3 498.1 1375.0 501.5C1377.7 504.9 1381.5 510.6 1382.8 512.4C1383.0 510.2 1383.5 503.4 1384.0 499.0C1384.5 494.6 1385.1 491.2 1386.0 486.0C1386.9 480.8 1388.2 473.8 1389.5 468.0C1390.8 462.2 1392.3 456.5 1394.0 451.0C1395.7 445.5 1397.7 440.3 1399.5 435.0C1401.3 429.7 1402.9 424.0 1404.8 419.2C1406.7 414.4 1408.8 410.1 1411.0 406.2C1413.2 402.2 1415.6 398.5 1418.0 395.5C1420.4 392.5 1422.8 389.9 1425.3 388.0C1427.8 386.1 1430.7 384.9 1432.8 384.4C1434.9 383.9 1436.4 384.2 1438.0 385.0C1439.6 385.8 1441.2 386.9 1442.5 389.0C1443.8 391.1 1444.7 394.3 1445.5 397.5C1446.3 400.7 1447.0 404.2 1447.4 408.0C1447.8 411.8 1448.0 416.1 1448.0 420.0C1448.0 423.9 1447.8 427.5 1447.4 431.7C1447.0 435.9 1446.3 440.4 1445.5 445.0C1444.7 449.6 1443.8 454.1 1442.5 459.0C1441.2 463.9 1439.6 469.3 1438.0 474.5C1436.4 479.7 1434.6 484.8 1432.8 490.0C1431.0 495.2 1429.0 500.3 1427.0 505.5C1425.0 510.7 1422.8 516.4 1421.0 521.0C1419.2 525.6 1417.8 529.1 1416.5 533.0C1415.2 536.9 1414.4 540.7 1413.4 544.5C1412.4 548.3 1411.2 552.6 1410.5 556.0C1409.8 559.4 1409.3 562.1 1409.0 565.0C1408.7 567.9 1408.6 569.8 1408.7 573.3C1408.8 576.8 1409.0 581.8 1409.5 586.0C1410.0 590.2 1410.8 594.1 1411.4 598.6C1412.0 603.1 1412.5 608.1 1413.0 613.0C1413.5 617.9 1413.9 622.8 1414.3 627.8C1414.7 632.8 1415.0 637.8 1415.2 643.0C1415.4 648.2 1415.4 653.7 1415.3 659.0C1415.2 664.3 1415.1 669.8 1414.8 675.0C1414.5 680.2 1414.0 685.5 1413.4 690.0C1412.8 694.5 1412.0 698.4 1411.0 702.0C1410.0 705.6 1408.8 709.1 1407.5 711.4C1406.2 713.7 1405.0 715.0 1403.5 716.0C1402.0 717.0 1400.2 717.3 1398.8 717.3C1397.4 717.3 1396.1 716.6 1395.0 716.0C1393.9 715.4 1393.1 714.7 1392.0 713.4C1390.9 712.1 1389.5 710.2 1388.3 708.0C1387.1 705.8 1385.9 703.6 1384.6 700.0C1383.3 696.4 1382.0 690.6 1380.5 686.2C1379.0 681.8 1377.7 678.1 1375.9 673.4C1374.2 668.7 1372.0 662.9 1370.0 658.2C1368.0 653.5 1366.1 649.3 1364.2 645.4C1362.3 641.5 1360.5 638.1 1358.4 634.8C1356.3 631.5 1353.7 628.3 1351.4 625.5C1349.1 622.7 1346.7 620.1 1344.4 617.9C1342.1 615.7 1339.7 613.9 1337.4 612.1C1335.1 610.4 1332.7 608.8 1330.4 607.4C1328.1 606.0 1326.1 605.0 1323.4 603.9C1320.7 602.8 1317.1 601.6 1314.0 601.0C1310.9 600.4 1307.8 600.1 1304.7 600.1C1301.6 600.1 1298.1 600.4 1295.4 600.8C1292.7 601.2 1290.5 601.7 1288.3 602.4C1286.1 603.1 1284.4 604.0 1282.5 605.1C1280.6 606.2 1278.7 607.7 1276.7 609.2C1274.8 610.8 1272.8 612.5 1270.8 614.4C1268.8 616.3 1266.9 618.4 1265.0 620.8C1263.1 623.2 1261.2 625.9 1259.2 629.0C1257.2 632.1 1255.2 635.8 1253.3 639.5C1251.3 643.2 1249.4 647.1 1247.5 651.2C1245.6 655.3 1243.7 659.7 1241.7 664.0C1239.8 668.3 1237.7 672.6 1235.8 676.9C1233.9 681.1 1232.3 685.8 1230.5 689.5C1228.7 693.2 1227.4 695.4 1225.0 699.0C1222.6 702.6 1219.2 707.9 1216.3 711.3C1213.4 714.6 1210.0 717.4 1207.5 719.1C1205.0 720.9 1203.2 721.3 1201.5 721.8C1199.8 722.3 1198.5 722.3 1197.0 722.2C1195.5 722.1 1193.8 721.9 1192.5 721.3C1191.2 720.6 1189.9 720.0 1189.1 718.3C1188.2 716.6 1187.4 714.2 1187.4 711.3C1187.4 708.4 1188.4 704.3 1189.1 700.8C1189.8 697.2 1190.7 693.6 1191.6 690.0C1192.5 686.4 1193.3 683.1 1194.4 678.9C1195.5 674.6 1196.8 669.3 1198.0 664.5C1199.2 659.7 1200.8 654.1 1201.8 650.0C1202.8 645.9 1203.4 643.0 1204.0 640.0C1204.6 637.0 1205.0 634.9 1205.6 631.7C1206.1 628.5 1206.9 624.4 1207.3 621.0C1207.7 617.6 1208.0 613.0 1208.2 611.4C1207.9 612.4 1207.0 615.6 1206.3 617.5C1205.6 619.4 1205.6 619.3 1204.1 623.0C1202.6 626.7 1199.7 634.3 1197.5 639.5C1195.3 644.7 1193.1 649.4 1190.9 654.4C1188.7 659.4 1186.5 664.6 1184.3 669.3C1182.1 674.0 1179.8 678.4 1177.6 682.5C1175.4 686.6 1173.2 690.6 1171.0 694.1C1168.8 697.6 1166.9 700.5 1164.4 703.2C1161.9 706.0 1158.8 708.7 1156.1 710.6C1153.3 712.5 1150.3 713.8 1147.9 714.8C1145.5 715.8 1143.3 716.3 1141.5 716.4C1139.7 716.5 1138.6 716.3 1137.3 715.6C1136.0 714.9 1134.7 713.6 1133.8 712.3C1132.9 710.9 1132.2 709.2 1132.0 707.5C1131.8 705.8 1132.0 703.9 1132.3 702.0C1132.6 700.1 1132.8 699.1 1133.6 696.0C1134.4 692.9 1136.0 687.7 1137.3 683.5C1138.6 679.3 1139.9 675.4 1141.4 670.6C1142.9 665.9 1144.7 660.2 1146.3 655.0C1147.9 649.8 1149.5 644.7 1151.0 639.5C1152.5 634.3 1154.0 629.2 1155.3 624.0C1156.6 618.8 1158.0 612.7 1159.0 608.3C1160.0 603.9 1160.4 601.0 1161.0 597.5C1161.6 594.0 1162.2 589.0 1162.4 587.3C1161.2 587.3 1157.6 587.6 1155.0 587.6C1152.4 587.6 1150.0 587.5 1147.0 587.3C1144.0 587.1 1140.2 586.9 1137.0 586.5C1133.8 586.1 1131.0 585.8 1127.8 585.0C1124.6 584.2 1121.2 583.1 1118.0 581.8C1114.8 580.5 1111.1 578.8 1108.3 577.2C1105.5 575.6 1103.3 573.9 1101.0 572.0C1098.7 570.1 1096.5 567.9 1094.7 565.6C1092.9 563.3 1091.2 560.6 1090.0 558.0C1088.8 555.4 1087.9 552.8 1087.3 550.0C1086.7 547.2 1086.3 544.2 1086.3 541.0C1086.2 537.8 1086.8 533.8 1087.0 531.0C1087.2 528.2 1087.7 526.3 1087.8 524.0C1087.9 521.7 1087.8 519.4 1087.5 517.0C1087.2 514.6 1086.4 512.0 1085.8 509.5C1085.2 506.9 1084.5 505.1 1084.0 501.7C1083.5 498.3 1082.9 493.2 1082.6 489.0C1082.3 484.8 1082.0 479.9 1082.0 476.4C1082.0 472.9 1082.0 470.6 1082.3 468.0C1082.5 465.4 1082.8 462.9 1083.5 461.0C1084.2 459.1 1086.0 457.2 1086.5 456.5Z" fill="#060606"/>
<!-- eyes -->
<path d="M1103.8 522.8C1103.8 521.6 1104.1 520.8 1105.1 519.9C1106.1 518.9 1107.5 518.0 1109.8 517.2C1112.1 516.4 1116.2 515.4 1118.7 515.1C1121.2 514.8 1122.7 515.1 1124.6 515.5C1126.6 516.0 1128.6 516.6 1130.6 517.8C1132.5 519.0 1134.8 520.8 1136.5 522.5C1138.2 524.3 1139.6 526.6 1140.7 528.5C1141.7 530.3 1142.4 532.5 1142.8 533.8C1143.1 535.1 1143.0 535.7 1142.8 536.5C1142.5 537.3 1142.3 537.8 1141.2 538.5C1140.2 539.3 1138.3 540.3 1136.5 540.9C1134.7 541.5 1132.5 542.0 1130.6 542.2C1128.6 542.5 1126.6 542.6 1124.6 542.4C1122.7 542.2 1120.7 541.7 1118.7 540.9C1116.7 540.1 1114.6 538.7 1112.8 537.4C1111.0 536.0 1109.3 534.3 1108.0 532.6C1106.8 530.9 1105.8 528.9 1105.1 527.3C1104.4 525.6 1103.8 524.1 1103.8 522.8Z" fill="#fff"/>
<ellipse cx="1125.5" cy="529.05" rx="7.4" ry="10.5" fill="#060606"/>
<path d="M1204.0 516.9C1203.7 515.7 1203.1 513.9 1201.7 512.9C1200.4 511.9 1197.8 511.4 1195.8 511.0C1193.8 510.5 1191.8 510.1 1189.9 510.2C1187.9 510.2 1185.9 510.6 1183.9 511.3C1182.0 511.9 1180.0 512.7 1178.0 514.2C1176.0 515.7 1173.7 518.2 1172.1 520.2C1170.5 522.1 1169.4 524.1 1168.5 526.1C1167.6 528.1 1167.1 530.6 1166.9 532.0C1166.6 533.4 1166.7 533.8 1167.2 534.7C1167.7 535.5 1168.4 536.4 1169.7 537.1C1171.0 537.7 1173.2 538.5 1175.0 538.8C1176.9 539.2 1179.0 539.3 1181.0 539.1C1182.9 539.0 1184.9 538.7 1186.9 537.9C1188.9 537.2 1190.9 536.1 1192.8 534.7C1194.7 533.3 1196.7 531.5 1198.2 529.6C1199.6 527.8 1200.8 525.3 1201.7 523.7C1202.6 522.1 1203.2 521.0 1203.6 519.9C1204.0 518.7 1204.3 518.1 1204.0 516.9Z" fill="#fff"/>
<ellipse cx="1183" cy="524.9" rx="7.4" ry="10.7" fill="#060606"/>
<text transform="translate(1239.9 556.4) scale(.928 1)" font-family="'Liberation Sans',sans-serif" font-size="22.6" letter-spacing="1.5" fill="#fff" stroke="#fff" stroke-width="1.45" stroke-linejoin="round" stroke-linecap="round">BLACK CAT</text>
</g>

<g id="ic-cut">
<path d="M20 109.500C19.600 104 22 99.500 26 96.500C28.500 93.500 30.500 91.500 33 90.700C35 90 36.500 90.900 38.300 90.300C40 89.500 41.500 87.300 44 86.300C47.500 84.900 52 85.700 54.500 88C57 90.500 57.300 94.500 55.800 97.500C55 99.200 55.500 100.500 56.500 102.500C58 105.500 58.300 109.500 57 112.500C55.800 115 53 116 49.500 116H29.500C25 116 20.500 114.500 20 109.500Z" fill="none" stroke="#d96f69" stroke-width="1.5" stroke-dasharray="3.7 2.5" stroke-linecap="butt"/>
<path d="M27.200 110H50.900C52.300 110 53 108.600 52.200 107.500L46.700 100.700C46 99.800 44.900 99.800 44.200 100.600L42 103L36.700 96.500C36 95.700 34.900 95.700 34.200 96.600L25.900 107.500C25.100 108.600 25.800 110 27.200 110Z" fill="#d96f69"/>
<circle cx="47.600" cy="93.900" r="3.150" fill="#d96f69"/>
</g>
<g id="ic-preview">
<rect x="1764.100" y="20.200" width="25.200" height="17.500" rx="1.800" fill="none" stroke="#555" stroke-width="2"/>
<rect x="1764" y="34.300" width="25.400" height="4.300" fill="#555"/>
<path d="M1773.500 38.500H1780L1781.500 42.700H1772Z" fill="#555"/>
<path d="M1775 24V30.700L1781 27.350Z" fill="#555"/>
</g>
<g id="ic-power" fill="none" stroke="#fff" stroke-linecap="round">
<path d="M1926.600 21.400A12.100 12.100 0 1 0 1940.200 21.400" stroke-width="2.700"/>
<path d="M1933.400 19V30" stroke-width="3"/>
</g>
<g id="ic-info">
<circle cx="2001.500" cy="163.200" r="17.400" fill="#3b3d47"/>
<text x="2001.500" y="171.500" text-anchor="middle" font-family="'Liberation Serif',serif" font-weight="bold" font-size="23.4" fill="#fff">i</text>
</g>
<g id="zoombar">
<rect x="1811" y="971" width="196" height="53.300" rx="26.650" fill="#3e3e3e"/>
<rect x="1825.200" y="979" width="49.500" height="37" rx="13" fill="#222"/>
<rect x="1838.800" y="991" width="21.700" height="13" rx="2.300" fill="none" stroke="#fff" stroke-width="1.300"/>
<path d="M1834.700 991.800V986.800H1839.700M1860.500 986.800H1865.500V991.800M1865.500 1003.600V1008.600H1860.500M1839.700 1008.600H1834.700V1003.600" fill="none" stroke="#fff" stroke-width="1.300"/>
<circle cx="1893.500" cy="997.600" r="14.050" fill="#222"/>
<path d="M1887.200 997.600H1899.900" stroke="#fff" stroke-width="1.500" fill="none"/>
<text x="1917" y="1004" font-family="'Liberation Mono',monospace" font-size="17" fill="#fff">100%</text>
</g>
<g id="chat">
<circle cx="1955" cy="975.100" r="40.700" fill="#d93532"/>
<path d="M1955.300 954.400C1966 954.400 1974.400 963 1974.400 973.800C1974.400 984.500 1966.500 991.500 1957.500 993.300C1954 994 1951 994.800 1948.200 996L1949.600 992.200C1941.500 989.500 1936.200 982.500 1936.200 973.800C1936.200 963 1944.600 954.400 1955.300 954.400Z" fill="#fff"/>
<path d="M1953.600 982C1957.500 982.600 1963 982.600 1967.100 981.900C1966 985.500 1963.500 987 1960.500 987C1957.500 987 1954.800 985.500 1953.600 982Z" fill="#d93532"/>
<circle cx="1982.600" cy="947.800" r="13.500" fill="#ad2621"/>
<text x="1982.700" y="952.900" text-anchor="middle" font-family="'Liberation Sans',sans-serif" font-size="14.2" fill="#fff" stroke="#fff" stroke-width=".3">1</text>
</g>
<g id="ic-gear" fill="none" stroke="#7d8493" stroke-width="1.7" stroke-linejoin="round"><path d="M36.36 994.30C36.58 993.77 36.45 991.39 36.62 990.88C36.80 990.38 37.32 990.33 37.75 990.25C38.18 990.17 39.62 990.17 40.05 990.25C40.48 990.33 41.00 990.38 41.18 990.88C41.35 991.39 41.22 993.77 41.44 994.30C41.66 994.83 42.54 994.99 42.94 995.15C43.33 995.32 44.06 995.83 44.60 995.61C45.13 995.38 46.72 993.61 47.20 993.38C47.68 993.14 48.09 993.48 48.45 993.72C48.81 993.97 49.83 994.99 50.08 995.35C50.32 995.71 50.66 996.12 50.42 996.60C50.19 997.08 48.42 998.67 48.19 999.20C47.97 999.74 48.48 1000.47 48.65 1000.86C48.81 1001.26 48.97 1002.14 49.50 1002.36C50.03 1002.58 52.41 1002.45 52.92 1002.62C53.42 1002.80 53.47 1003.32 53.55 1003.75C53.63 1004.18 53.63 1005.62 53.55 1006.05C53.47 1006.48 53.42 1007.00 52.92 1007.18C52.41 1007.35 50.03 1007.22 49.50 1007.44C48.97 1007.66 48.81 1008.54 48.65 1008.94C48.48 1009.33 47.97 1010.06 48.19 1010.60C48.42 1011.13 50.19 1012.72 50.42 1013.20C50.66 1013.68 50.32 1014.09 50.08 1014.45C49.83 1014.81 48.81 1015.83 48.45 1016.08C48.09 1016.32 47.68 1016.66 47.20 1016.42C46.72 1016.19 45.13 1014.42 44.60 1014.19C44.06 1013.97 43.33 1014.48 42.94 1014.65C42.54 1014.81 41.66 1014.97 41.44 1015.50C41.22 1016.03 41.35 1018.41 41.18 1018.92C41.00 1019.42 40.48 1019.47 40.05 1019.55C39.62 1019.63 38.18 1019.63 37.75 1019.55C37.32 1019.47 36.80 1019.42 36.62 1018.92C36.45 1018.41 36.58 1016.03 36.36 1015.50C36.14 1014.97 35.26 1014.81 34.86 1014.65C34.47 1014.48 33.74 1013.97 33.20 1014.19C32.67 1014.42 31.08 1016.19 30.60 1016.42C30.12 1016.66 29.71 1016.32 29.35 1016.08C28.99 1015.83 27.97 1014.81 27.72 1014.45C27.48 1014.09 27.14 1013.68 27.38 1013.20C27.61 1012.72 29.38 1011.13 29.61 1010.60C29.83 1010.06 29.32 1009.33 29.15 1008.94C28.99 1008.54 28.83 1007.66 28.30 1007.44C27.77 1007.22 25.39 1007.35 24.88 1007.18C24.38 1007.00 24.33 1006.48 24.25 1006.05C24.17 1005.62 24.17 1004.18 24.25 1003.75C24.33 1003.32 24.38 1002.80 24.88 1002.62C25.39 1002.45 27.77 1002.58 28.30 1002.36C28.83 1002.14 28.99 1001.26 29.15 1000.86C29.32 1000.47 29.83 999.74 29.61 999.20C29.38 998.67 27.61 997.08 27.38 996.60C27.14 996.12 27.48 995.71 27.72 995.35C27.97 994.99 28.99 993.97 29.35 993.72C29.71 993.48 30.12 993.14 30.60 993.38C31.08 993.61 32.67 995.38 33.20 995.61C33.74 995.83 34.47 995.32 34.86 995.15C35.26 994.99 36.14 994.83 36.36 994.30Z"/><circle cx="38.9" cy="1004.9" r="6.2"/></g>
<!-- panel controls -->
<g id="controls">
<rect x="101.4" y="213.4" width="376.6" height="48.9" rx="10" fill="#6366e8"/>
<rect x="102.4" y="350.5" width="107.1" height="47" rx="6.5" fill="#fff" stroke="#d8d8d8" stroke-width="1.2"/>
<rect x="242.5" y="350.5" width="107.1" height="47" rx="6.5" fill="#f0f0f0" stroke="#e6e6e6" stroke-width="1.2"/>
<rect x="380.3" y="349.5" width="97.7" height="48.9" rx="10" fill="#6366e8"/>
<rect x="102" y="580.9" width="376" height="13.5" rx="6.75" fill="#d8d8d8"/>
<circle cx="115.1" cy="587.6" r="13.7" fill="#6366e8"/>
<rect x="552.7" y="107.4" width="154.1" height="46.3" rx="23.15" fill="#757575"/>
</g>
<g fill="#fff" stroke-width="1.6">
<g stroke="#ababab">
<rect x="243.3" y="690.3" width="93.2" height="110" rx="9.5"/>
<rect x="359.9" y="690.3" width="93.2" height="110" rx="9.5"/>
<rect x="380" y="831.5" width="94.5" height="44.9" rx="6"/>
<rect x="277.9" y="905.1" width="94.5" height="45" rx="6"/>
</g>
<g stroke="#7275ef">
<rect x="126.9" y="690.3" width="92.8" height="110" rx="9.5"/>
<rect x="277.9" y="831.5" width="94.5" height="44.9" rx="6"/>
<rect x="380" y="905.1" width="94.5" height="45" rx="6"/>
</g>
</g>
<!-- hole size icons -->
<g fill="none" stroke-width="1.5">
<g stroke="#6366e8"><circle cx="173.5" cy="731.8" r="17"/><circle cx="173.5" cy="731.8" r="8"/></g>
<g stroke="#8f8f8f"><circle cx="290" cy="731.8" r="22.5"/><circle cx="290" cy="731.8" r="10.5"/>
<circle cx="406.3" cy="731.8" r="26.8"/><circle cx="406.3" cy="731.8" r="13.2"/></g>
</g>
</svg>

<!-- text labels (real text, width-fitted with scaleX) -->
<h1 class="t" id="t-title" style="left:23.00px;top:19.60px;font-size:24.0px;color:#333;transform:scaleX(0.9219)">Acrylic Glitter Keyrings _Basic (1 Designs)</h1>
<span class="t" id="t-preview" style="left:1799.81px;top:22.90px;font-size:18.5px;color:#555;transform:scaleX(0.9908)">Preview</span>
<span class="t" id="t-close" style="left:1956.14px;top:22.90px;font-size:18.5px;color:#fff;transform:scaleX(0.9630)">Close</span>
<span class="t" id="t-cutting" style="left:10.68px;top:126.20px;font-size:17.5px;color:#fff;transform:scaleX(1.0241)">Cutting</span>
<h2 class="t b" id="t-imgfmt" style="left:101.71px;top:89.80px;font-size:24.6px;color:#333;transform:scaleX(0.8962)">Image Format: JPG, PNG</h2>
<p class="t" id="t-p1" style="left:113.00px;top:135.00px;font-size:20.6px;color:#333;transform:scaleX(0.9560)">When you upload an image, it</p>
<p class="t" id="t-p2" style="left:112.02px;top:168.00px;font-size:20.6px;color:#333;transform:scaleX(0.9842)">automatically generates an outline.</p>
<span class="t b" id="t-upload" style="left:226.56px;top:230.00px;font-size:20.6px;color:#fff;transform:scaleX(0.9398)">Upload Image</span>
<h2 class="t b" id="t-psi" style="left:101.66px;top:301.50px;font-size:24.6px;color:#333;transform:scaleX(0.9196)">Product Size Input (mm)</h2>
<span class="t" id="t-v45" style="left:145.50px;top:366.30px;font-size:20.6px;color:#333;transform:scaleX(0.9545)">45</span>
<span class="t" id="t-vx" style="left:221.00px;top:366.30px;font-size:20.6px;color:#333;transform:scaleX(0.9500)">x</span>
<span class="t" id="t-v42" style="left:285.50px;top:366.30px;font-size:20.6px;color:#6b6b6b;transform:scaleX(0.9545)">42</span>
<span class="t b" id="t-apply" style="left:406.57px;top:366.00px;font-size:20.6px;color:#fff;transform:scaleX(0.9286)">Apply</span>
<p class="t" id="t-n1" style="left:100.18px;top:426.00px;font-size:20.6px;color:#333;transform:scaleX(0.9386)">※ Enter size</p>
<p class="t" id="t-n2" style="left:100.20px;top:453.50px;font-size:20.6px;color:#333;transform:scaleX(0.9331)">※ min 20 x 20 mm ~ max 80 x 80 mm</p>
<h2 class="t b" id="t-adj" style="left:101.39px;top:524.30px;font-size:24.6px;color:#333;transform:scaleX(0.9139)">Adjust Outline</h2>
<span class="t" id="t-v2mm" style="left:426.99px;top:524.00px;font-size:20.6px;color:#333;transform:scaleX(1.0102)">2 mm</span>
<h2 class="t b" id="t-hs" style="left:101.71px;top:647.00px;font-size:24.6px;color:#333;transform:scaleX(0.8925)">Hole Size</h2>
<span class="t" id="t-h1" style="left:141.00px;top:775.50px;font-size:20.6px;color:#6366e8;transform:scaleX(1.0000)">3-7mm</span>
<span class="t" id="t-h2" style="left:258.75px;top:775.50px;font-size:20.6px;color:#333;transform:scaleX(0.9841)">4-9mm</span>
<span class="t" id="t-h3" style="left:368.99px;top:775.50px;font-size:20.6px;color:#333;transform:scaleX(1.0069)">5-11mm</span>
<h2 class="t b" id="t-hc" style="left:101.69px;top:844.40px;font-size:24.6px;color:#333;transform:scaleX(0.9070)">Hole Count</h2>
<span class="t" id="t-c1" style="left:320.10px;top:845.50px;font-size:20.6px;color:#6366e8;transform:scaleX(0.9000)">1</span>
<span class="t" id="t-c2" style="left:421.00px;top:845.50px;font-size:20.6px;color:#333;transform:scaleX(1.0000)">2</span>
<h2 class="t b" id="t-hp" style="left:101.68px;top:918.00px;font-size:24.6px;color:#333;transform:scaleX(0.9078)">Hole Position</h2>
<span class="t" id="t-inner" style="left:301.98px;top:919.50px;font-size:20.6px;color:#333;transform:scaleX(1.0111)">Inner</span>
<span class="t" id="t-outer" style="left:401.50px;top:919.50px;font-size:20.6px;color:#6366e8;transform:scaleX(1.0000)">Outer</span>
<span class="t" id="t-cmp" style="left:573.03px;top:123.00px;font-size:18.6px;color:#fff;transform:scaleX(0.9655)">Compare Size</span>
<div id="frame"></div>
</body>
</html>
